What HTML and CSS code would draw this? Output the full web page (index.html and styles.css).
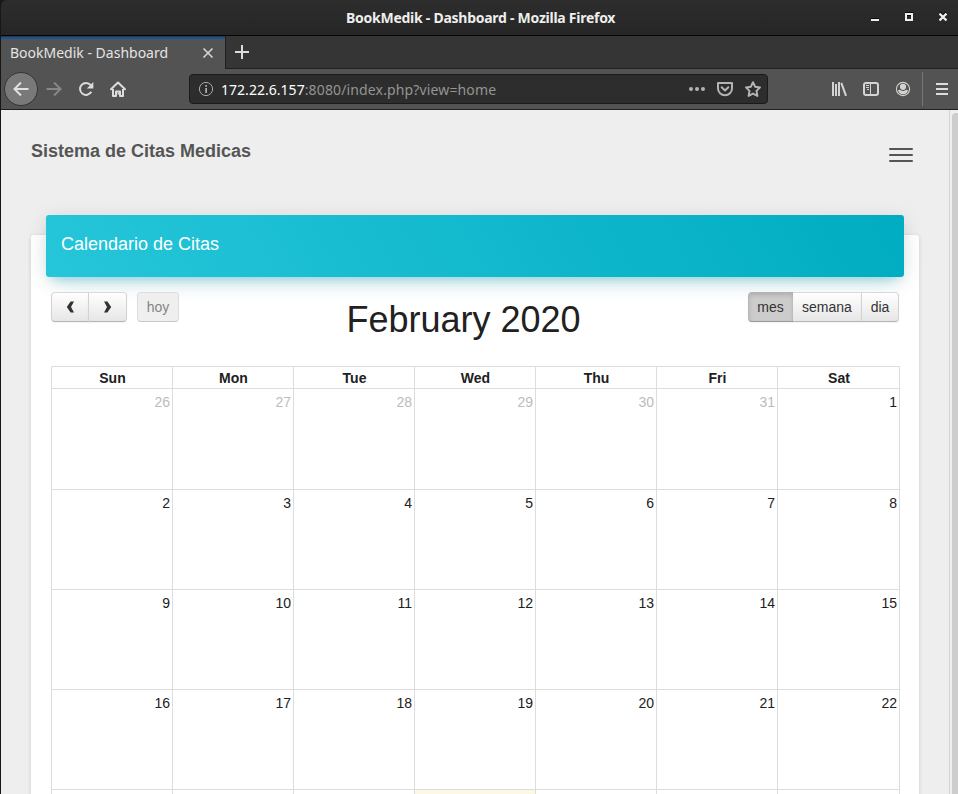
FILE: index.html
```html
<!DOCTYPE html>
<html lang="es">
<head>
<meta charset="utf-8">
<title>BookMedik - Dashboard</title>
<link rel="stylesheet" href="styles.css">
</head>
<body>
<div class="window">
  <header class="titlebar">
    <span></span>
    <span class="window-title">BookMedik - Dashboard - Mozilla Firefox</span>
    <div class="window-controls">
      <svg width="8" height="12" viewBox="0 0 8 12"><path d="M0 7h8v1H0z" fill="#0a0a0a"/><path d="M0 8h8v2H0z" fill="#eee"/></svg>
      <svg width="8" height="12" viewBox="0 0 8 12"><path d="M0 1h8v1H0zM2 4h4v1H2z" fill="#0a0a0a"/><path d="M1 3h6v6H1z" fill="none" stroke="#eee" stroke-width="2"/></svg>
      <svg width="8" height="12" viewBox="0 0 8 12"><path d="M.8 1.200l6.400 6.400M7.200 1.200L.8 7.600" stroke="#0a0a0a" stroke-width="2"/><path d="M.5 2.500l7 7M7.500 2.500l-7 7" stroke="#eee" stroke-width="2.300"/></svg>
    </div>
  </header>
  <div class="tabs">
    <div class="tab">
      <span class="tab-title">BookMedik - Dashboard</span>
      <svg width="12" height="12" viewBox="0 0 12 12"><path d="M1.500 1.500l9 9M10.500 1.500l-9 9" stroke="#d2d2d0" stroke-width="1.700"/></svg>
    </div>
    <div class="new-tab">
      <svg width="14" height="14" viewBox="0 0 14 14"><path d="M7 0v14M0 7h14" stroke="#dcdcda" stroke-width="2"/></svg>
    </div>
  </div>
  <nav class="toolbar">
    <span class="back"><svg width="16" height="16" viewBox="0 0 16 16"><path d="M15.500 8H1.500M8 1.500L1.500 8 8 14.500" fill="none" stroke="#e0e0de" stroke-width="2"/></svg></span>
    <svg class="forward" width="16" height="16" viewBox="0 0 16 16"><path d="M.5 8h14M8 1.500L14.500 8 8 14.500" fill="none" stroke="#888" stroke-width="2"/></svg>
    <svg class="reload" width="16" height="16" viewBox="0 0 16 16"><path d="M13.300 10.800A6 6 0 1 1 12.600 4" fill="none" stroke="#dcdcda" stroke-width="2"/><path d="M15.300 1v6.500H8.800z" fill="#dcdcda"/></svg>
    <svg class="home" width="16" height="16" viewBox="0 0 16 16"><path d="M1 8.300L8 1.500l7 6.800" fill="none" stroke="#dcdcda" stroke-width="2" stroke-linecap="round" stroke-linejoin="round"/><path d="M3 8V15h3v-4.500h4V15h3V8" fill="none" stroke="#dcdcda" stroke-width="2" stroke-linejoin="round"/><path d="M7.500 11.500H9V13.500H7.500z" fill="#dcdcda"/></svg>
    <div class="urlbar">
      <svg width="16" height="16" viewBox="0 0 16 16"><circle cx="8" cy="8" r="6.600" fill="none" stroke="#aaa" stroke-width="1"/><path d="M7.200 4h1.800v1.800H7.200zM7.200 7h1.800v5H7.200z" fill="#aaa"/></svg>
      <span class="url"><b>172.22.6.157</b>:8080/index.php?view=home</span>
      <svg class="dots" width="16" height="16" viewBox="0 0 16 16"><circle cx="2" cy="8" r="2" fill="#b4b4b3"/><circle cx="8" cy="8" r="2" fill="#b4b4b3"/><circle cx="14" cy="8" r="2" fill="#b4b4b3"/></svg>
      <svg class="pocket" width="16" height="16" viewBox="0 0 16 16"><path d="M1 2h14v5.500a7 6.700 0 0 1-14 0z" fill="none" stroke="#b4b4b3" stroke-width="2" stroke-linejoin="round"/><path d="M4.700 6.300L8 9.500l3.300-3.200" fill="none" stroke="#b4b4b3" stroke-width="2" stroke-linecap="round" stroke-linejoin="round"/></svg>
      <svg width="16" height="16" viewBox="0 0 16 16"><path d="M8 1.200l2.100 4.500 4.900.7-3.500 3.500.9 5L8 12.600l-4.400 2.300.9-5L1 6.400l4.900-.7z" fill="none" stroke="#b4b4b3" stroke-width="2" stroke-linejoin="round"/></svg>
    </div>
    <svg class="library" width="16" height="16" viewBox="0 0 16 16"><path d="M2 1v14M5 3v12M8 1v14" stroke="#d4d4d2" stroke-width="2"/><path d="M10.300 1.800l4.700 13" stroke="#d4d4d2" stroke-width="2"/></svg>
    <svg class="sidebar-icon" width="16" height="16" viewBox="0 0 16 16"><rect x="1" y="2" width="14" height="12" rx="2" fill="none" stroke="#d4d4d2" stroke-width="2"/><path d="M7.500 2v12M3 4.500h3M3 6.500h3M4 8.500h2" stroke="#d4d4d2"/></svg>
    <svg class="account" width="16" height="16" viewBox="0 0 16 16"><circle cx="8" cy="8" r="6.600" fill="none" stroke="#d4d4d2" stroke-width="1.100"/><circle cx="8" cy="5.800" r="3.100" fill="#d4d4d2"/><path d="M3 9.200Q4.500 8.600 5.300 9Q8 10.800 10.700 9Q11.500 8.600 13 9.200Q12 13.300 8 13.300T3 9.200z" fill="#d4d4d2"/></svg>
    <span class="divider"></span>
    <svg class="app-menu" width="12" height="12" viewBox="0 0 12 12"><path d="M0 1h12M0 6h12M0 11h12" stroke="#dcdcda" stroke-width="2"/></svg>
  </nav>
  <div class="viewport">
    <main class="page">
      <div class="navbar">
        <span class="brand">Sistema de Citas Medicas</span>
        <span class="burger"><i></i><i></i><i></i></span>
      </div>
      <section class="card">
        <div class="card-header">Calendario de Citas</div>
        <div class="calendar">
          <div class="cal-toolbar">
            <div class="left">
              <div class="group">
                <span class="btn arrow"><svg width="9" height="12" viewBox="0 0 9 12"><path d="M4.600.5H8L5 6l3 5.500H4.600L.8 6z" fill="#333"/></svg></span><span class="btn arrow"><svg width="9" height="12" viewBox="0 0 9 12"><path d="M4.400.5H1L4 6l-3 5.500h3.400L8.200 6z" fill="#333"/></svg></span>
              </div>
              <div class="group"><span class="btn today">hoy</span></div>
            </div>
            <h2>February 2020</h2>
            <div class="group views"><span class="btn active">mes</span><span class="btn week">semana</span><span class="btn day">dia</span></div>
          </div>
          <div class="grid">
            <b>Sun</b><b>Mon</b><b>Tue</b><b>Wed</b><b>Thu</b><b>Fri</b><b>Sat</b>
            <span class="other">26</span><span class="other">27</span><span class="other">28</span><span class="other">29</span><span class="other">30</span><span class="other">31</span><span>1</span>
            <span>2</span><span>3</span><span>4</span><span>5</span><span>6</span><span>7</span><span>8</span>
            <span>9</span><span>10</span><span>11</span><span>12</span><span>13</span><span>14</span><span>15</span>
            <span>16</span><span>17</span><span>18</span><span>19</span><span>20</span><span>21</span><span>22</span>
            <span></span><span></span><span></span><span class="now"></span><span></span><span></span><span></span>
          </div>
        </div>
      </section>
    </main>
    <div class="scrollbar"><div class="thumb"></div></div>
  </div>
</div>
</body>
</html>
```

FILE: styles.css
```css
* { box-sizing: border-box; }
body { margin: 0; background: #1a1a1a; overflow: hidden; }
svg { display: block; flex: none; }

.window {
  width: 958px;
  height: 794px;
  display: flex;
  flex-direction: column;
  overflow: hidden;
  border-left: 1px solid #171717;
  font-family: "Noto Sans", sans-serif;
}

/* Browser frame */
.titlebar {
  flex: none;
  height: 36px;
  display: grid;
  grid-template-columns: 345px 1fr 87px;
  align-items: center;
  background: linear-gradient(#2d2d2d, #262626);
  border-bottom: 1px solid #060606;
  border-radius: 6px 0 0 0;
}
.window-title { font-size: 14px; font-weight: 700; line-height: 20px; color: #eeeeec; letter-spacing: -0.26px; white-space: nowrap; }
.window-controls { display: flex; gap: 26px; margin-top: -1px; }

.tabs { flex: none; height: 33px; display: flex; background: #353535; }
.tab {
  width: 224px;
  margin-top: 1px;
  padding: 0 11px 3px 9px;
  display: flex;
  align-items: center;
  justify-content: space-between;
  background: #535353;
  border-top: 2px solid #15539e;
}
.tab-title { font-size: 14px; line-height: 19px; color: #e4e4e2; white-space: nowrap; }
.new-tab { flex: 1; padding: 9px 0 0 9px; border-left: 1px solid #202020; border-bottom: 1px solid #202020; }

.toolbar { flex: none; height: 41px; display: flex; align-items: center; background: #535353; border-bottom: 1px solid #202020; }
.back {
  width: 34px;
  height: 34px;
  margin-left: 3px;
  display: flex;
  align-items: center;
  justify-content: center;
  background: #797979;
  border: 1px solid #343434;
  border-radius: 50%;
}
.forward { margin-left: 8px; }
.reload { margin-left: 16px; }
.home { margin-left: 16px; }
.urlbar {
  width: 579px;
  height: 30px;
  margin-left: 63px;
  padding: 0 6px 0 8px;
  display: flex;
  align-items: center;
  background: #2d2d2d;
  border: 1px solid #1a1a1a;
  border-radius: 4px;
}
.url { flex: 1; margin-left: 7px; font-size: 14px; color: #949493; letter-spacing: 0.14px; white-space: nowrap; }
.url b { font-weight: 400; color: #fff; letter-spacing: 0.03px; }
.pocket { margin: 0 12px; }
.library { margin-left: 63px; }
.sidebar-icon, .account { margin-left: 16px; }
.divider { width: 1px; height: 34px; margin-left: 11px; background: #767676; }
.app-menu { margin-left: 13px; }

/* Page */
.viewport { flex: 1; min-height: 0; display: flex; background: #eee; font-family: "Liberation Sans", Arial, sans-serif; }
.page { flex: 1; padding-right: 30px; overflow: hidden; }
.scrollbar { width: 9px; padding: 3px 0 0 2px; overflow: hidden; background: #efefee; border-left: 1px solid #d5d2cf; }
.thumb { width: 10px; height: 700px; background: #cdcdcd; border-radius: 4px 4px 0 0; }

.navbar { height: 125px; padding: 30px 6px 0 30px; display: flex; justify-content: space-between; }
.brand { font-size: 18px; line-height: 22px; font-weight: 700; color: #555; }
.burger { width: 24px; padding-top: 8px; display: flex; flex-direction: column; gap: 4px; }
.burger i { height: 2px; background: #555; border-radius: 1px; }

.card {
  height: 700px;
  margin-left: 30px;
  background: #fff;
  border-radius: 3px;
  box-shadow: 0 1px 4px rgba(0, 0, 0, 0.14);
  display: flow-root;
}
.card-header {
  height: 62px;
  margin: -20px 15px 0;
  padding: 18px 15px;
  font-size: 18px;
  line-height: 22px;
  color: #fff;
  background: linear-gradient(60deg, #26c6da, #00acc1);
  border-radius: 3px;
  box-shadow: 0 12px 20px -10px rgba(0, 188, 212, 0.28), 0 4px 20px 0 rgba(0, 0, 0, 0.12), 0 7px 8px -5px rgba(0, 188, 212, 0.2);
}
.calendar { padding: 15px 19px 0 20px; font-size: 14px; color: #212121; }
.cal-toolbar { height: 74px; display: flex; justify-content: space-between; align-items: flex-start; }
.cal-toolbar h2 { margin: 0; padding-top: 1px; font-size: 36px; line-height: 54px; font-weight: 400; }
.left, .group { display: flex; }
.left { gap: 10px; }
.views { margin-right: 1px; }
.btn {
  height: 30px;
  display: flex;
  align-items: center;
  justify-content: center;
  color: #333;
  background: linear-gradient(#fff, #e6e6e6);
  border: 1px solid;
  border-color: #d9d9d9 #d2d2d2 #b5b5b5;
  box-shadow: inset 0 1px 0 rgba(255, 255, 255, 0.2), 0 1px 2px rgba(0, 0, 0, 0.05);
}
.btn + .btn { margin-left: -1px; }
.btn:first-child { border-top-left-radius: 4px; border-bottom-left-radius: 4px; }
.btn:last-child { border-top-right-radius: 4px; border-bottom-right-radius: 4px; }
.arrow { width: 38px; }
.arrow + .arrow { width: 39px; }
.today { width: 42px; color: #848484; background: #efefef; border-color: #ddd #ddd #c8c8c8; box-shadow: none; }
.active { width: 46px; padding-right: 1px; background: #ccc; border-color: #b2b2b2 #b8b8b8 #999; box-shadow: inset 0 2px 4px rgba(0, 0, 0, 0.15), 0 1px 2px rgba(0, 0, 0, 0.05); }
.week { width: 69px; padding-right: 1px; border-left-color: transparent; }
.day { width: 38px; }

.grid {
  display: grid;
  grid-template-columns: repeat(6, 121px) 122px;
  grid-template-rows: 22px 101px 100px 100px 100px 100px;
  border-right: 1px solid #ddd;
}
.grid > * { border-top: 1px solid #ddd; border-left: 1px solid #ddd; line-height: 21px; }
.grid b { padding: 1px 0 0 1px; text-align: center; line-height: 20px; }
.grid span { padding: 3px 2px 0 0; text-align: right; }
.grid .other { color: #bcbcbc; }
.grid .now { background: #fcf8e3; }
```
